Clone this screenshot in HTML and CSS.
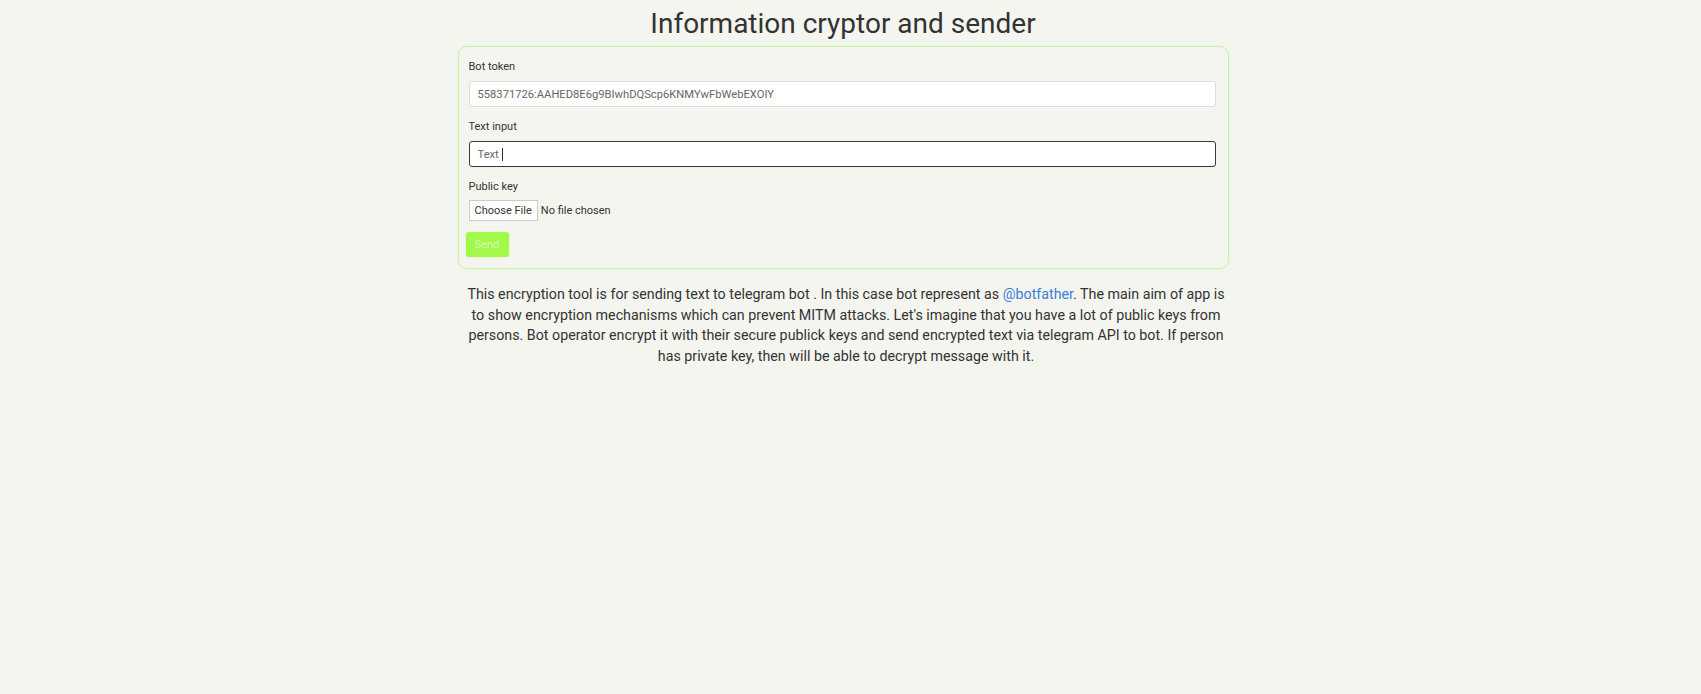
FILE: index.html
```html
<!DOCTYPE html>
<html>
<head>
<meta charset="utf-8">
<link rel="stylesheet" href="styles.css">
</head>
<body>
<div class="page">
  <h1 class="title">Information cryptor and sender</h1>
  <form class="card">
    <label class="label">Bot token</label>
    <div class="field">558371726:AAHED8E6g9BIwhDQScp6KNMYwFbWebEXOIY</div>
    <label class="label">Text input</label>
    <div class="field field-focus">Text<span class="caret"></span></div>
    <label class="label label-file">Public key</label>
    <div class="file-row">
      <span class="file-btn">Choose File</span>
      <span class="file-text">No file chosen</span>
    </div>
    <div class="actions"><span class="send">Send</span></div>
  </form>
  <p class="desc">This encryption tool is for sending text to telegram bot . In this case bot represent as <a class="link" href="#">@botfather</a>. The main aim of app is to show encryption mechanisms which can prevent MITM attacks. Let's imagine that you have a lot of public keys from persons. Bot operator encrypt it with their secure publick keys and send encrypted text via telegram API to bot. If person has private key, then will be able to decrypt message with it.</p>
</div>
</body>
</html>
```
FILE: styles.css
```css
html, body {
  margin: 0;
  padding: 0;
  background: #f5f5f0;
  font-family: Roboto, "Liberation Sans", sans-serif;
  color: #333;
}
body {
  padding-right: 15px;
}
.page {
  width: 771px;
  margin: 0 auto;
}
.title {
  margin: 0 0 5px 0;
  padding-top: 6px;
  height: 35px;
  font-size: 28px;
  font-weight: 400;
  text-align: center;
  color: #333;
  line-height: 35px;
}
.card {
  box-sizing: border-box;
  border: 1px solid #c8f3a4;
  box-shadow: 0 0 2px #d8f8c0;
  border-radius: 9px;
  padding: 14px 12px 11px 10px;
  display: block;
  margin: 0;
}
.label {
  display: block;
  font-size: 11px;
  color: #333;
  line-height: 12px;
  margin: 0 0 8px 0;
}
.label-file {
  margin-bottom: 7px;
}
.field {
  box-sizing: border-box;
  height: 26px;
  border: 1px solid #dcdcdc;
  border-radius: 3px;
  background: #fff;
  font-size: 11.2px;
  color: #666;
  padding: 0 8px;
  margin: 0 0 14px 0;
  display: flex;
  align-items: center;
}
.field-focus {
  border-color: #3a3a3a;
}
.caret {
  display: inline-block;
  width: 1px;
  height: 13px;
  background: #333;
  margin-left: 3px;
}
.file-row {
  display: flex;
  align-items: center;
  gap: 3px;
  height: 21px;
}
.file-btn {
  box-sizing: border-box;
  height: 21px;
  padding: 0 5px;
  border: 1px solid #ccc;
  background: #fff;
  font-size: 11px;
  line-height: 19px;
  color: #333;
}
.file-text {
  font-size: 11px;
  color: #333;
}
.actions {
  margin-top: 11px;
  margin-left: -3px;
  height: 25px;
}
.send {
  display: inline-block;
  box-sizing: border-box;
  width: 43px;
  height: 25px;
  line-height: 25px;
  text-align: center;
  background: #a2f94a;
  border-radius: 3px;
  box-shadow: 0 0 2px #c6fb96;
  color: #d6fcb4;
  font-size: 11px;
  vertical-align: top;
}
.desc {
  margin: 15px 0 0 0;
  padding-left: 6px;
  font-size: 14.25px;
  line-height: 20.6px;
  text-align: center;
  color: #333;
}
.link {
  color: #3b7fd6;
  text-decoration: none;
}
```
